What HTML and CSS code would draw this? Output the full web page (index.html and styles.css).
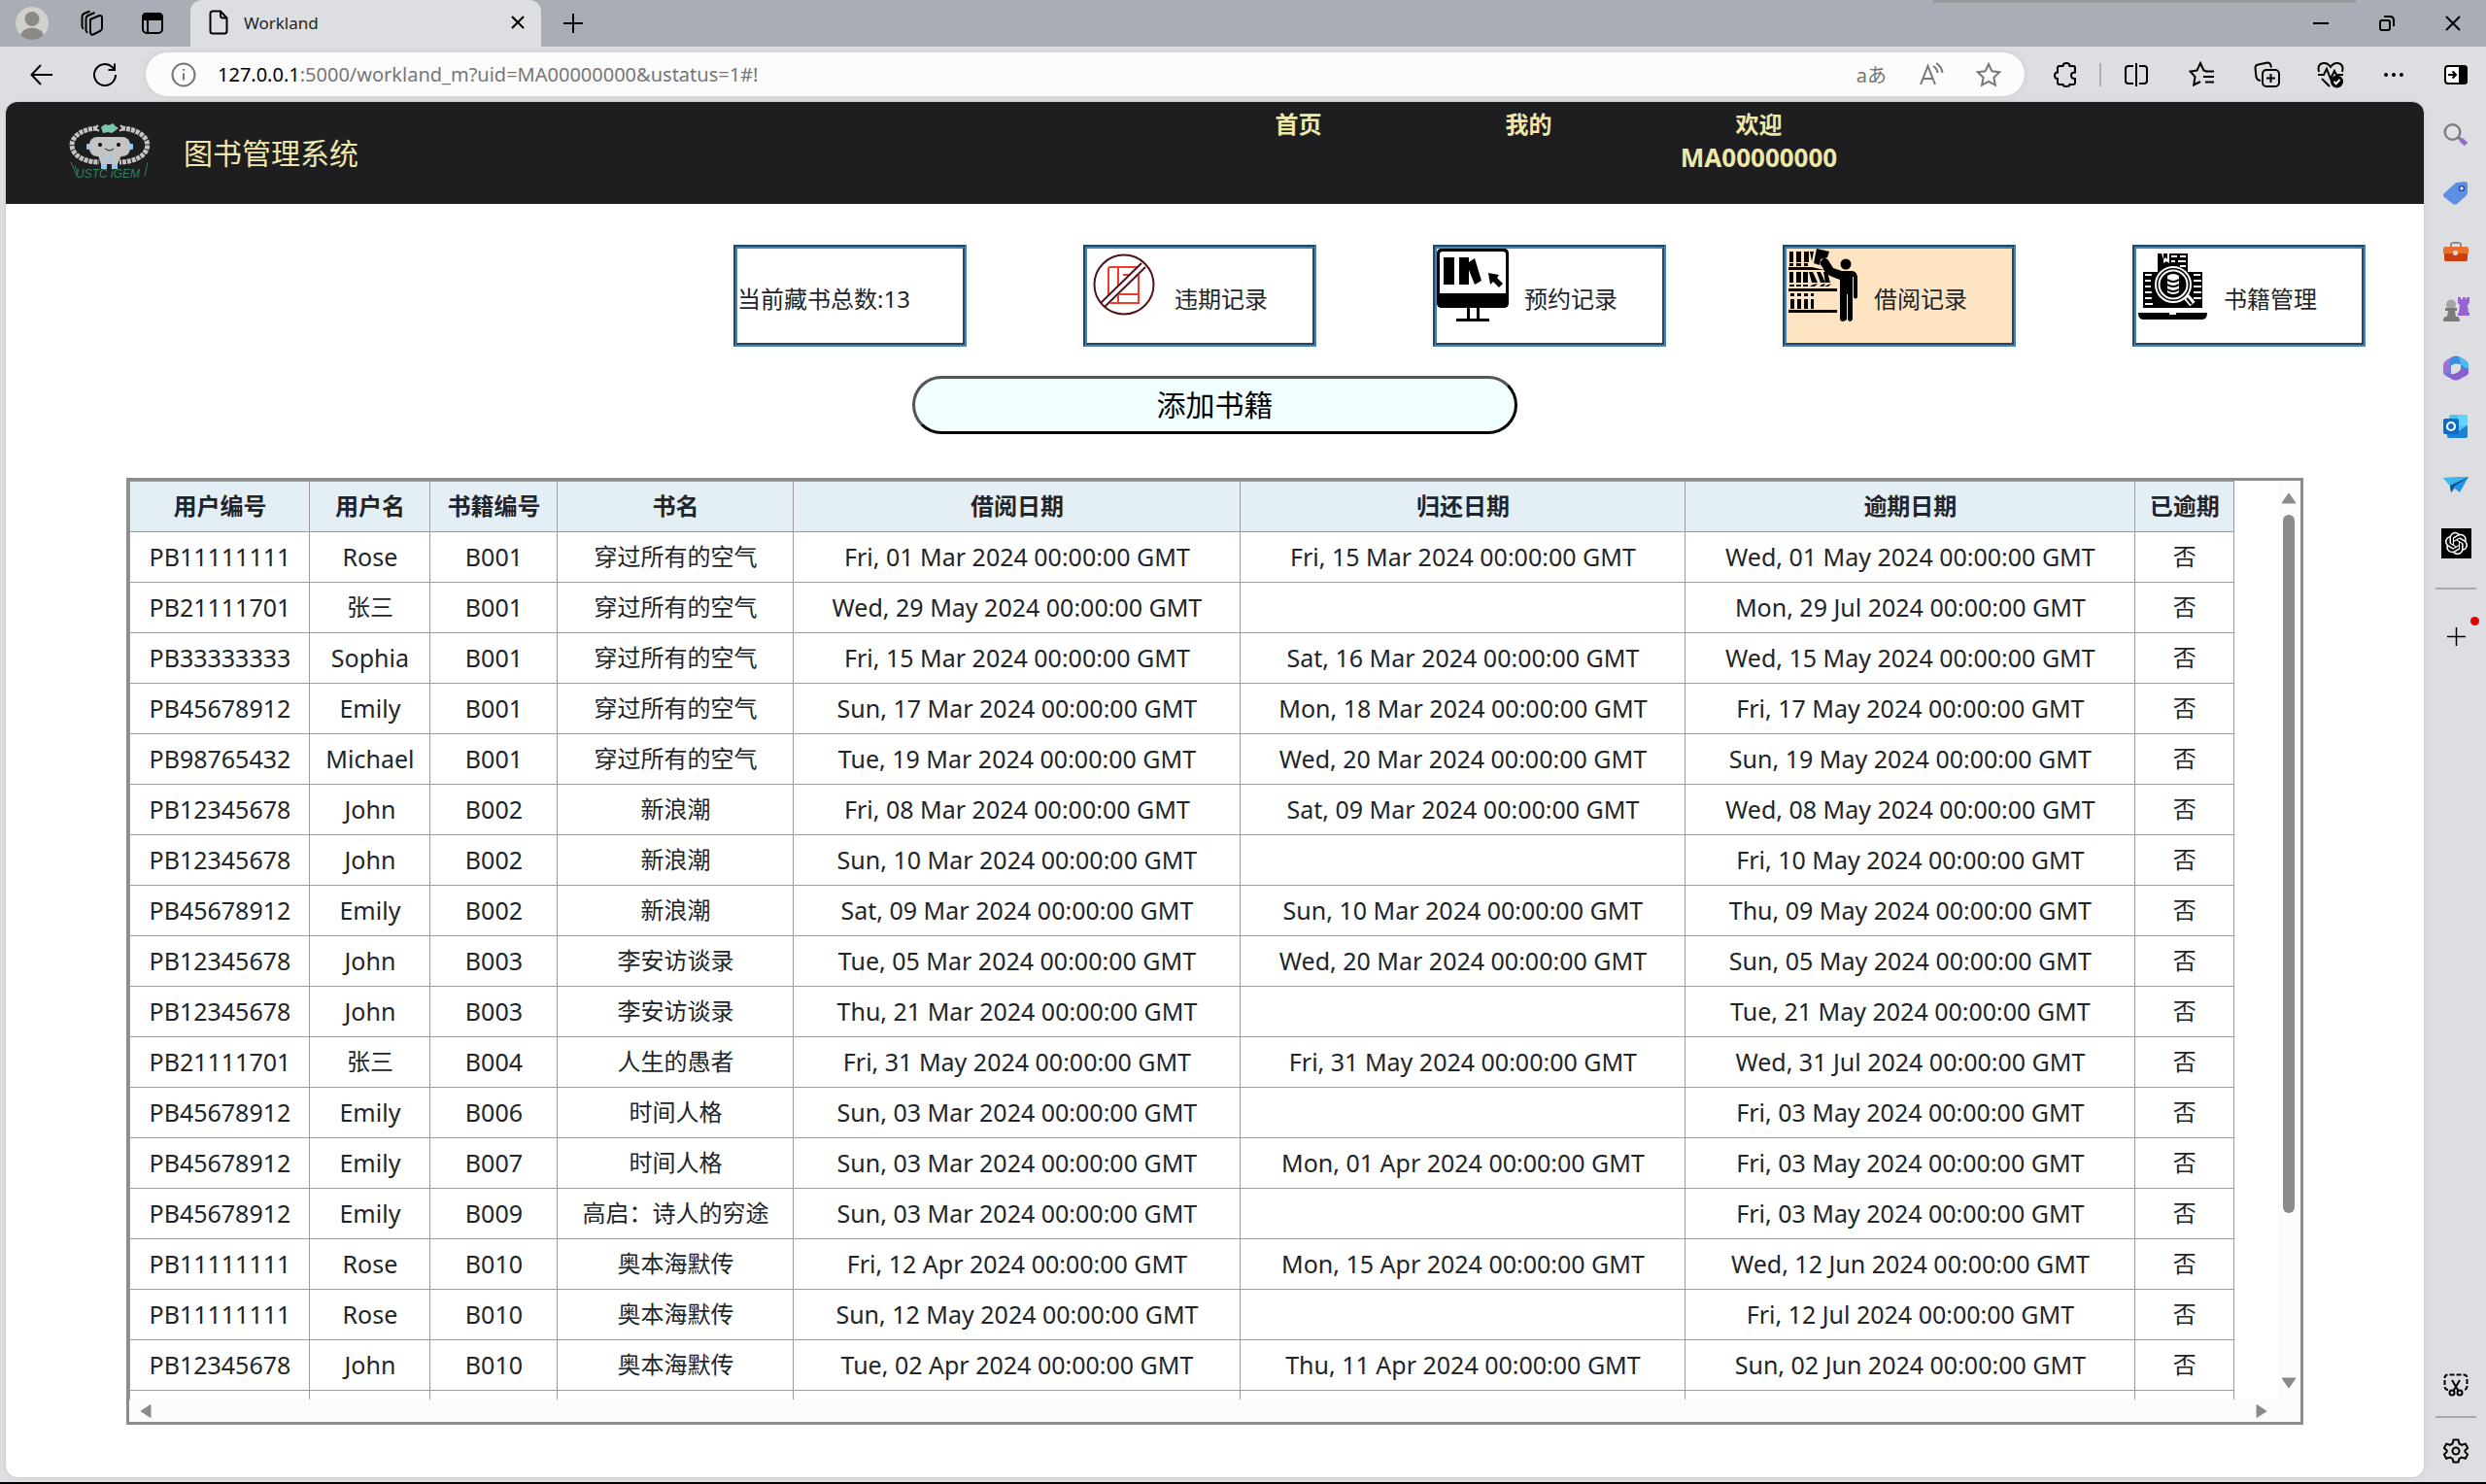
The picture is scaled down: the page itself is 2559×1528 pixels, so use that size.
FILE: index.html
```html
<!DOCTYPE html>
<html lang="zh-CN">
<head>
<meta charset="utf-8">
<title>Workland</title>
<link rel="stylesheet" href="styles.css">
</head>
<body>
<div class="browser">
  <header class="tabstrip">
    <button class="cell cell-tab" aria-label="用户">
      <svg width="34" height="34" viewBox="0 0 34 34"><defs><clipPath id="av"><circle cx="17" cy="17" r="17"/></clipPath></defs><circle cx="17" cy="17" r="17" fill="#d2d0cd"/><g clip-path="url(#av)" fill="#8b8886"><circle cx="17" cy="12.500" r="7.500"/><ellipse cx="17" cy="31" rx="12" ry="9.500"/></g></svg>
    </button>
    <button class="cell cell-tab" aria-label="工作区">
      <svg class="line" width="28" height="28" viewBox="0 0 28 28"><path d="M12 10l8-3.500q4-1.500 4 2v10.500q0 2-2 3l-6 3q-4 2-4-2z"/><path d="M7.500 21V9q0-2 2-3l7-3M3.500 17V7q0-2 2-3l6-2.500M7.500 21q0 2 2 2.500M3.500 17q0 2 1.500 2.500"/></svg>
    </button>
    <button class="cell cell-tab" aria-label="标签">
      <svg class="line" width="24" height="24" viewBox="0 0 24 24"><rect x="2" y="2" width="20" height="20" rx="4"/><path d="M2 8V6q0-4 4-4h12q4 0 4 4v2z" fill="#000"/><path d="M7 8v14"/></svg>
    </button>
    <div class="tab">
      <svg class="line" width="20" height="26" viewBox="0 0 20 26"><path d="M4 1.500h8l6.500 7V22q0 2.500-2.500 2.500H4Q1.500 24.500 1.500 22V4Q1.500 1.500 4 1.500zM12 1.500V6q0 2.500 2.500 2.500h4"/></svg>
      <span class="tab-title">Workland</span>
      <button class="plain" aria-label="关闭标签"><svg class="line" width="14" height="14" viewBox="0 0 14 14"><path d="M1 1l12 12M13 1L1 13"/></svg></button>
    </div>
    <button class="cell" aria-label="新建标签"><svg class="line" width="22" height="22" viewBox="0 0 22 22"><path d="M11 1v20M1 11h20"/></svg></button>
    <div class="spacer"></div>
    <div class="shade"></div>
    <button class="cell cell-win" aria-label="最小化"><svg width="16" height="16" viewBox="0 0 16 16"><path d="M0 7h16v2H0z"/></svg></button>
    <button class="cell cell-win" aria-label="还原"><svg class="line" width="18" height="18" viewBox="0 0 18 18"><rect x="2" y="6" width="10" height="10" rx="2"/><path d="M6 2h6q4 0 4 4v6"/></svg></button>
    <button class="cell cell-win" aria-label="关闭"><svg class="line" width="16" height="16" viewBox="0 0 16 16"><path d="M1 1l14 14M15 1L1 15"/></svg></button>
  </header>

  <div class="toolbar">
    <button class="cell" aria-label="返回"><svg class="line" width="24" height="22" viewBox="0 0 24 22"><path d="M23 11H1.500M11 1L1.500 11 11 21"/></svg></button>
    <button class="cell" aria-label="刷新"><svg class="line" width="26" height="26" viewBox="0 0 26 26"><path d="M24 13A11 11 0 1 1 20.500 5L23 7.500M23 1.500v6.500h-6.500"/></svg></button>
    <label class="address">
      <svg class="line grey" width="26" height="26" viewBox="0 0 26 26"><circle cx="13" cy="13" r="11.500"/><path d="M13 11.500v7M13 7v1.800"/></svg>
      <span class="host">127.0.0.1</span>
      <input class="url" type="text" value=":5000/workland_m?uid=MA00000000&amp;ustatus=1#!">
      <span class="addr-icons">
        <span class="translate">aあ</span>
        <svg class="line grey" width="26" height="26" viewBox="0 0 26 26"><path d="M2 23L9.500 4 17 23M4.500 17h10M15 4q4 2.500 4.500 7M18 1q6 4 6.500 10"/></svg>
        <svg class="line grey" width="26" height="26" viewBox="0 0 26 26"><path d="M13 2l3.400 7.300 7.900 1-5.900 5.500 1.500 7.900L13 19.900l-6.900 3.800 1.500-7.900-5.900-5.500 7.900-1z"/></svg>
      </span>
    </label>
    <button class="cell" aria-label="扩展"><svg class="line" width="26" height="26" viewBox="0 0 26 26"><path d="M6 4h3.500q0-3 3.500-3t3.500 3H20q2 0 2 2v4.500q-4 0-4 3.200t4 3.200V21q0 2-2 2h-3.500q0 2-3.500 2t-3.500-2H6q-2 0-2-2v-4q-3 0-3-3.200T4 10.500V6q0-2 2-2z"/></svg></button>
    <span class="bar"></span>
    <button class="cell cell-wide" aria-label="分屏"><svg class="line" width="26" height="26" viewBox="0 0 26 26"><path d="M10 4H5Q2 4 2 7v12q0 3 3 3h5M16 4h5q3 0 3 3v12q0 3-3 3h-5M13 1v24"/></svg></button>
    <button class="cell cell-wide" aria-label="收藏夹"><svg class="line" width="28" height="28" viewBox="0 0 28 28"><path d="M18 10l-2.500-.5L12 2 8.500 9.500l-7 1 5 5.500-1.300 8.500 6.800-3.500M17 10.500h9M15 16h11M17 21.500h9"/></svg></button>
    <button class="cell" aria-label="集锦"><svg class="line" width="28" height="28" viewBox="0 0 28 28"><path d="M7 20l-2-.5q-2-1-2.500-3L1.500 7q0-3 3-3.500L14 1.500q3 0 3.500 3l.5 2"/><rect x="9" y="9" width="17" height="17" rx="4"/><path d="M17.500 13v9M13 17.500h9"/></svg></button>
    <button class="cell" aria-label="性能"><svg class="line" width="28" height="28" viewBox="0 0 28 28"><path d="M2 11Q0 3 6.500 2 11 1.500 14 6q3-4.500 7.500-4Q28 3 26 11M1 14h6l3-6 4 10 4-8 2 4h7M5 18l8 8"/><circle cx="20.500" cy="21" r="6.500" fill="#000" stroke="none"/><path d="M17.500 21l2.200 2.200 3.800-4.200" stroke="#fff"/></svg></button>
    <button class="cell" aria-label="更多"><svg width="22" height="6" viewBox="0 0 22 6"><circle cx="3" cy="3" r="2"/><circle cx="11" cy="3" r="2"/><circle cx="19" cy="3" r="2"/></svg></button>
    <button class="cell cell-side" aria-label="侧边栏"><svg class="line" width="24" height="20" viewBox="0 0 24 20"><rect x="1" y="1" width="22" height="18" rx="3" fill="#fff"/><path d="M16 1h4q3 0 3 3v12q0 3-3 3h-4z" fill="#000"/><path d="M4 10h8M8.500 6.500L12 10l-3.500 3.500"/></svg></button>
  </div>

  <div class="body">
    <main class="page">
      <div class="masthead">
        <svg class="logo" viewBox="0 0 90 60">
          <path d="M32 6C-3 8-3 40 34 41M57 6C93 8 93 40 55 41" fill="none" stroke="#c4c4c4" stroke-width="5" stroke-dasharray="4 1"/>
          <path d="M33 3l-3 3 4 3M56 3l3 3-4 3" fill="none" stroke="#c4c4c4" stroke-width="2"/>
          <path d="M36 5l4-3 4 1 4-2 3 3 3 2-4 3-3 2-4-1-5 1z" fill="#7cc6ad"/>
          <rect x="21" y="22" width="4" height="6" rx="1" fill="#8fc9f5"/><rect x="65" y="22" width="4" height="6" rx="1" fill="#8fc9f5"/>
          <rect x="24" y="15" width="42" height="20" rx="8" fill="#c4c4c4"/><path d="M33 34h24l-4 9H36z" fill="#c4c4c4"/>
          <circle cx="35" cy="23" r="2"/><circle cx="54" cy="23" r="2"/><path d="M40 27q5 4 9 0" fill="none" stroke="#111"/>
          <circle cx="32" cy="28" r="1.500" fill="#e6b4b4"/><circle cx="58" cy="28" r="1.500" fill="#e6b4b4"/>
          <path d="M42 36q-2 5 2.500 5t2.500-5M44.500 34v4" fill="none" stroke="#8fc9f5"/>
          <path d="M36 43h6v5h-6zM47 43h6v5h-6z" fill="#8fc9f5"/>
          <text x="10" y="57" class="logo-text">USTC iGEM</text>
          <path d="M5 41l6 14M84 41l-3 14M9 44l3 9" stroke="#2f8160"/>
        </svg>
        <h1 class="brand">图书管理系统</h1>
        <nav class="nav">
          <a href="#home">首页</a>
          <a href="#mine">我的</a>
          <a href="#user">欢迎<br><span class="uid">MA00000000</span></a>
        </nav>
      </div>

      <div class="cards">
        <div class="card">当前藏书总数:13</div>
        <button class="card">
          <svg width="75" height="75" viewBox="0 0 75 75" fill="none" stroke-width="2"><path d="M24 19h29v37H24q-2 0-2-2V21q0-2 2-2zM32 19v37M22 47h31M37 27h8" stroke="#ef3a2d"/><path d="M15 56L57 15l4 4-42 42z" fill="#fff" stroke="none"/><circle cx="38" cy="37" r="30.500" stroke="#50151a"/><path d="M14 56L56 15M18 60L60 19" stroke="#50151a"/></svg>
          违期记录
        </button>
        <button class="card">
          <svg width="75" height="75" viewBox="0 0 75 75"><path d="M5 0h64q5 0 5 5v51q0 5-5 5H44v11h10v3H20v-3h11V61H5q-5 0-5-5V5q0-5 5-5zM6 3Q3 3 3 6v40h68V6q0-3-3-3zM34 61v11h7V61z" fill-rule="evenodd"/><path d="M7 9h11v28H7zM23 9h10v5l6-4 7 23-7 4-6-15v15H23zM53 25l11 2-2 3 6 6-4 4-6-6-3 3z"/></svg>
          预约记录
        </button>
        <button class="card active">
          <svg width="75" height="75" viewBox="0 0 75 75"><path d="M3 3h4v11H3zM10 3h5v11h-5zM18 3h5v11h-5zM24 3h4l-2 10zM3 15h4v3H3zM10 15h5v3h-5zM18 15h4v3h-4zM2 19h24l13 3H2zM3 24h4v11H3zM10 24h5v11h-5zM17 24h5v11h-5zM23 24h4l5 11h-6zM31 24h4l5 11h-5zM38 24h4l3 11h-5zM3 37h5v2H3zM10 37h5v2h-5zM17 37h5v2h-5zM27 37l5-1-3 3h-5zM36 37l4-1-2 3h-4zM43 37l3-1-3 3h-4zM2 41h50v3H2zM4 46h4v3H4zM11 46h4v3h-4zM18 46h4v3h-4zM25 46h3v3h-3zM4 52h4v10H4zM11 52h4v10h-4zM18 52h4v10h-4zM25 52h3v10h-3zM2 63h50v3H2zM31 0l13 3-2 6-7 2-1 6-6-2z"/><circle cx="61" cy="16" r="5.500"/><path d="M37 11q3-3 6 1l5 8 9 3h10q6 0 6 8v19q-2 3-4 0V29h-1v44q-3 4-5 0V47h-1v26q-5 4-7 0V32l-8-3q-8-3-10-10-5-4 0-8z"/></svg>
          借阅记录
        </button>
        <button class="card">
          <svg width="75" height="75" viewBox="0 0 75 75"><path d="M22 5h31v19h15v37H7V24h15zM2 66h32v2h7v-2h32q0 7-5 7H7q-5 0-5-7z"/><path d="M26 5h2v10l3-2 3 2V5h-2v6l-2-2-2 2M36 7h6v2h-6zM45 7h6v2h-6zM36 12h4v2h-4zM43 12h8v2h-8zM45 17h6v2h-6zM9 26h7v2H9zM9 32h6v2H9zM9 38h6v2H9zM9 44h7v2H9zM9 50h7v2H9zM9 56h8v2H9zM59 26h7v2h-7zM59 32h8v2h-8zM59 38h8v2h-8zM59 44h8v2h-8zM59 50h8v2h-8z" fill="#fff"/><circle cx="38" cy="37" r="18" stroke="#fff" stroke-width="2"/><circle cx="38" cy="37" r="14.500" fill="none" stroke="#fff" stroke-width="2"/><path d="M32 28q6-4 12 0v17q-6 4-12 0z" fill="#fff"/><path d="M32 32q6 4 12 0M32 37q6 4 12 0M32 42q6 4 12 0" fill="none" stroke="#000" stroke-width="2"/><path d="M51 49l7 8" stroke="#fff" stroke-width="7"/><path d="M52 51l5 6" stroke="#000" stroke-width="2"/></svg>
          书籍管理
        </button>
      </div>

      <button class="add">添加书籍</button>

      <section class="panel">
        <div class="scroll">
          <table>
            <colgroup><col class="c-id"><col class="c-name"><col class="c-book"><col class="c-title"><col class="c-loan"><col class="c-return"><col><col class="c-over"></colgroup>
            <thead><tr><th>用户编号</th><th>用户名</th><th>书籍编号</th><th>书名</th><th>借阅日期</th><th>归还日期</th><th>逾期日期</th><th>已逾期</th></tr></thead>
            <tbody>
              <tr><td>PB11111111</td><td>Rose</td><td>B001</td><td class="zh">穿过所有的空气</td><td>Fri, 01 Mar 2024 00:00:00 GMT</td><td>Fri, 15 Mar 2024 00:00:00 GMT</td><td>Wed, 01 May 2024 00:00:00 GMT</td><td class="zh">否</td></tr>
              <tr><td>PB21111701</td><td class="zh">张三</td><td>B001</td><td class="zh">穿过所有的空气</td><td>Wed, 29 May 2024 00:00:00 GMT</td><td></td><td>Mon, 29 Jul 2024 00:00:00 GMT</td><td class="zh">否</td></tr>
              <tr><td>PB33333333</td><td>Sophia</td><td>B001</td><td class="zh">穿过所有的空气</td><td>Fri, 15 Mar 2024 00:00:00 GMT</td><td>Sat, 16 Mar 2024 00:00:00 GMT</td><td>Wed, 15 May 2024 00:00:00 GMT</td><td class="zh">否</td></tr>
              <tr><td>PB45678912</td><td>Emily</td><td>B001</td><td class="zh">穿过所有的空气</td><td>Sun, 17 Mar 2024 00:00:00 GMT</td><td>Mon, 18 Mar 2024 00:00:00 GMT</td><td>Fri, 17 May 2024 00:00:00 GMT</td><td class="zh">否</td></tr>
              <tr><td>PB98765432</td><td>Michael</td><td>B001</td><td class="zh">穿过所有的空气</td><td>Tue, 19 Mar 2024 00:00:00 GMT</td><td>Wed, 20 Mar 2024 00:00:00 GMT</td><td>Sun, 19 May 2024 00:00:00 GMT</td><td class="zh">否</td></tr>
              <tr><td>PB12345678</td><td>John</td><td>B002</td><td class="zh">新浪潮</td><td>Fri, 08 Mar 2024 00:00:00 GMT</td><td>Sat, 09 Mar 2024 00:00:00 GMT</td><td>Wed, 08 May 2024 00:00:00 GMT</td><td class="zh">否</td></tr>
              <tr><td>PB12345678</td><td>John</td><td>B002</td><td class="zh">新浪潮</td><td>Sun, 10 Mar 2024 00:00:00 GMT</td><td></td><td>Fri, 10 May 2024 00:00:00 GMT</td><td class="zh">否</td></tr>
              <tr><td>PB45678912</td><td>Emily</td><td>B002</td><td class="zh">新浪潮</td><td>Sat, 09 Mar 2024 00:00:00 GMT</td><td>Sun, 10 Mar 2024 00:00:00 GMT</td><td>Thu, 09 May 2024 00:00:00 GMT</td><td class="zh">否</td></tr>
              <tr><td>PB12345678</td><td>John</td><td>B003</td><td class="zh">李安访谈录</td><td>Tue, 05 Mar 2024 00:00:00 GMT</td><td>Wed, 20 Mar 2024 00:00:00 GMT</td><td>Sun, 05 May 2024 00:00:00 GMT</td><td class="zh">否</td></tr>
              <tr><td>PB12345678</td><td>John</td><td>B003</td><td class="zh">李安访谈录</td><td>Thu, 21 Mar 2024 00:00:00 GMT</td><td></td><td>Tue, 21 May 2024 00:00:00 GMT</td><td class="zh">否</td></tr>
              <tr><td>PB21111701</td><td class="zh">张三</td><td>B004</td><td class="zh">人生的愚者</td><td>Fri, 31 May 2024 00:00:00 GMT</td><td>Fri, 31 May 2024 00:00:00 GMT</td><td>Wed, 31 Jul 2024 00:00:00 GMT</td><td class="zh">否</td></tr>
              <tr><td>PB45678912</td><td>Emily</td><td>B006</td><td class="zh">时间人格</td><td>Sun, 03 Mar 2024 00:00:00 GMT</td><td></td><td>Fri, 03 May 2024 00:00:00 GMT</td><td class="zh">否</td></tr>
              <tr><td>PB45678912</td><td>Emily</td><td>B007</td><td class="zh">时间人格</td><td>Sun, 03 Mar 2024 00:00:00 GMT</td><td>Mon, 01 Apr 2024 00:00:00 GMT</td><td>Fri, 03 May 2024 00:00:00 GMT</td><td class="zh">否</td></tr>
              <tr><td>PB45678912</td><td>Emily</td><td>B009</td><td class="zh">高启：诗人的穷途</td><td>Sun, 03 Mar 2024 00:00:00 GMT</td><td></td><td>Fri, 03 May 2024 00:00:00 GMT</td><td class="zh">否</td></tr>
              <tr><td>PB11111111</td><td>Rose</td><td>B010</td><td class="zh">奥本海默传</td><td>Fri, 12 Apr 2024 00:00:00 GMT</td><td>Mon, 15 Apr 2024 00:00:00 GMT</td><td>Wed, 12 Jun 2024 00:00:00 GMT</td><td class="zh">否</td></tr>
              <tr><td>PB11111111</td><td>Rose</td><td>B010</td><td class="zh">奥本海默传</td><td>Sun, 12 May 2024 00:00:00 GMT</td><td></td><td>Fri, 12 Jul 2024 00:00:00 GMT</td><td class="zh">否</td></tr>
              <tr><td>PB12345678</td><td>John</td><td>B010</td><td class="zh">奥本海默传</td><td>Tue, 02 Apr 2024 00:00:00 GMT</td><td>Thu, 11 Apr 2024 00:00:00 GMT</td><td>Sun, 02 Jun 2024 00:00:00 GMT</td><td class="zh">否</td></tr>
              <tr><td></td><td></td><td></td><td></td><td></td><td></td><td></td><td></td></tr>
            </tbody>
          </table>
        </div>
        <div class="vbar">
          <svg width="16" height="12" viewBox="0 0 16 12"><path d="M8 1l7 10H1z" stroke="#8b8b8b" stroke-linejoin="round"/></svg>
          <div class="track"><div class="thumb"></div></div>
          <svg width="16" height="12" viewBox="0 0 16 12"><path d="M1 1h14L8 11z" stroke="#8b8b8b" stroke-linejoin="round"/></svg>
        </div>
        <div class="hbar">
          <svg width="12" height="16" viewBox="0 0 12 16"><path d="M11 1.500v13L1 8z" stroke="#8b8b8b" stroke-linejoin="round"/></svg>
          <svg width="12" height="16" viewBox="0 0 12 16"><path d="M1 1.500L11 8 1 14.500z" stroke="#8b8b8b" stroke-linejoin="round"/></svg>
        </div>
        <div class="corner"></div>
      </section>
    </main>

    <aside class="sidebar">
      <button class="side" aria-label="搜索"><svg width="26" height="24" viewBox="0 0 26 24"><circle cx="9.500" cy="9" r="7.800" fill="#dfe3e8" stroke="#7d7d7d" stroke-width="2.400"/><path d="M15 14l3 2.500" stroke="#7d7d7d" stroke-width="3"/><path d="M18 16.500l5.500 5" stroke="#9a67cf" stroke-width="5"/></svg></button>
      <button class="side" aria-label="购物"><svg width="26" height="26" viewBox="0 0 26 26"><path d="M13 2l9-1q3 0 3 3v8q0 2-2 4l-9 8q-2 1-4 0l-9-7q-2-2 0-4z" fill="#5d8fe3"/><circle cx="19" cy="8" r="2.500" fill="#dce8fa" stroke="#2b51a0" stroke-width="1.500"/></svg></button>
      <button class="side" aria-label="工具"><svg width="28" height="22" viewBox="0 0 28 22"><path d="M9 7V4q0-2 2-2h6q2 0 2 2v3" fill="none" stroke="#8f8f8f" stroke-width="2"/><rect x="1" y="6" width="26" height="8" rx="2" fill="#e9702e"/><path d="M2 13h24v6q0 2-2 2H4q-2 0-2-2z" fill="#ca3f12"/><rect x="11" y="10" width="5" height="5" rx="2" fill="#d9d9d9"/></svg></button>
      <button class="side" aria-label="游戏"><svg width="28" height="28" viewBox="0 0 28 28"><path d="M16 1h3v2h2V1h3v2h1V1h3v6l-2 2 1 8h1v3H16v-3h1l1-8-2-2z" fill="#9b63d2"/><circle cx="9" cy="8.500" r="5" fill="#a5a5a5"/><path d="M3 12h12v3h-2l1 6h2q2 1 2 5H1q0-4 2-5h2l1-6H3z" fill="#7a7a7a"/></svg></button>
      <button class="side" aria-label="Microsoft 365"><svg width="26" height="26" viewBox="0 0 26 26"><path d="M10 1L3 5Q0 7 0 10v7q0 3 3 4l5 2V9z" fill="#a070d8"/><path d="M10 1q3-1 6 0l7 4q3 2 3 5v7l-8-2V9L8 10l-1 9-5 1 5-5V4z" fill="#3a8ee0"/><path d="M16 1l7 4q3 2 3 5v5l-8-6z" fill="#4cbcf0"/><path d="M26 13v4q0 3-3 4l-7 4q-3 1-6 0l-7-4 5-2q6 1 10-5z" fill="#8a5fce"/><circle cx="13" cy="13" r="4.500" fill="#dddee2"/></svg></button>
      <button class="side" aria-label="Outlook"><svg width="26" height="26" viewBox="0 0 26 26"><rect x="6" y="1" width="19" height="15" rx="2" fill="#4cc3f5"/><path d="M15 1h8q2 0 2 2v9H15z" fill="#61d5fb"/><path d="M4 12l11 6 10-6v11q0 2-2 2H6q-2 0-2-2z" fill="#1a83d4"/><rect x="0" y="5" width="16" height="16" rx="2" fill="#0f6cc4"/><circle cx="8" cy="13" r="4" fill="none" stroke="#fff" stroke-width="2.200"/></svg></button>
      <button class="side" aria-label="Drop"><svg width="26" height="18" viewBox="0 0 26 18"><path d="M0 2L26 1 17 17l-5-4-4 4-1-7z" fill="#2594dc"/><path d="M0 2L26 1 7 10z" fill="#3db6ee"/><path d="M26 1L7 10l1 7 3-6z" fill="#0b4f96"/></svg></button>
      <button class="side" aria-label="ChatGPT"><svg width="31" height="31" viewBox="-4 -4 32 32"><path d="M-4-4h32v32H-4z"/><path fill="#fff" d="M22.282 9.821a5.985 5.985 0 0 0-.516-4.910 6.046 6.046 0 0 0-6.510-2.900A6.065 6.065 0 0 0 4.981 4.182a5.985 5.985 0 0 0-3.998 2.900 6.046 6.046 0 0 0 .743 7.097 5.980 5.980 0 0 0 .511 4.911 6.051 6.051 0 0 0 6.515 2.900A5.985 5.985 0 0 0 13.260 24a6.056 6.056 0 0 0 5.772-4.206 5.989 5.989 0 0 0 3.998-2.900 6.056 6.056 0 0 0-.748-7.073zm-9.022 12.608a4.476 4.476 0 0 1-2.876-1.041l.142-.080 4.778-2.758a.795.795 0 0 0 .393-.681v-6.737l2.020 1.169a.071.071 0 0 1 .038.052v5.583a4.504 4.504 0 0 1-4.495 4.494zm-9.661-4.125a4.471 4.471 0 0 1-.535-3.014l.142.085 4.783 2.758a.771.771 0 0 0 .781 0l5.843-3.369v2.332a.080.080 0 0 1-.033.062L9.740 19.950a4.499 4.499 0 0 1-6.141-1.646zM2.341 7.896a4.485 4.485 0 0 1 2.366-1.973V11.600a.766.766 0 0 0 .388.677l5.814 3.354-2.020 1.169a.076.076 0 0 1-.071 0l-4.830-2.787A4.504 4.504 0 0 1 2.341 7.872zm16.596 3.856L13.104 8.364 15.119 7.200a.076.076 0 0 1 .071 0l4.830 2.791a4.494 4.494 0 0 1-.677 8.104v-5.677a.790.790 0 0 0-.407-.667zm2.011-3.023l-.142-.085-4.774-2.782a.776.776 0 0 0-.785 0L9.409 9.230V6.897a.066.066 0 0 1 .028-.062l4.830-2.787a4.499 4.499 0 0 1 6.680 4.660zM8.307 12.863l-2.020-1.164a.080.080 0 0 1-.038-.057V6.074a4.499 4.499 0 0 1 7.376-3.454l-.142.081L8.704 5.459a.795.795 0 0 0-.393.681zm1.098-2.365l2.602-1.500 2.607 1.500v2.999l-2.597 1.500-2.607-1.500Z"/></svg></button>
      <hr>
      <button class="side add-app" aria-label="添加"><svg class="line" width="19" height="19" viewBox="0 0 19 19"><path d="M9.500 0v19M0 9.500h19" stroke-width="1.500"/></svg><span class="dot"></span></button>
      <div class="spacer"></div>
      <button class="side" aria-label="截图"><svg class="line" width="26" height="24" viewBox="0 0 26 24"><path d="M5 17q-3.500 0-3.500-4V5q0-3.500 3.500-3.500h16q3.500 0 3.500 3.500v8q0 4-3.500 4" stroke-dasharray="5 2"/><path d="M9 7l6.500 11M17 7l-6.500 11"/><circle cx="9" cy="20" r="2.500"/><circle cx="17" cy="20" r="2.500"/></svg></button>
      <hr class="low">
      <button class="side" aria-label="设置"><svg class="line" width="26" height="26" viewBox="0 0 26 26"><path d="M10.500 1.500h5l1 4 2.500 1.300 3.800-1.200 2.400 4.300-2.800 2.600v1.400l2.800 2.600-2.400 4.300-3.800-1.200-2.500 1.300-1 3.600h-5l-1-3.600L7 19.600l-3.800 1.200L.9 16.500l2.800-2.600v-1.400L.9 9.900l2.400-4.300L7 6.800l2.500-1.300z"/><circle cx="13" cy="13" r="3.500"/></svg></button>
    </aside>
  </div>
</div>
</body>
</html>
```
FILE: styles.css
```css
* { box-sizing: border-box; }

body {
  margin: 0;
  font-family: "Noto Sans", "Noto Sans CJK SC", sans-serif;
  color: #212529;
}

button {
  padding: 0;
  border: 0;
  background: none;
  font: inherit;
  color: inherit;
}

svg { display: block; flex: none; }
.line { fill: none; stroke: #000; stroke-width: 2; }
.grey { stroke: #767676; }
.spacer { flex: 1; }

.browser {
  display: flex;
  flex-direction: column;
  height: 100vh;
  background: #dddee2;
  border-bottom: 2px solid #000;
}

.cell {
  display: flex;
  flex: none;
  align-items: center;
  justify-content: center;
  width: 65px;
}

/* tab strip */
.tabstrip {
  position: relative;
  display: flex;
  flex: none;
  height: 48px;
  padding-left: 2px;
  background: #a9aeb6;
}
.cell-tab { width: 62px; }
.cell-win { width: 68px; }
.tab {
  display: flex;
  align-items: center;
  gap: 16px;
  width: 361px;
  margin-left: 8px;
  padding: 0 17px 2px 19px;
  border-radius: 12px 12px 0 0;
  background: #dddee2;
  font-size: 17px;
}
.tab-title { flex: 1; }
.shade {
  position: absolute;
  top: 0;
  right: 134px;
  width: 435px;
  height: 3px;
  background: #959a9c;
}

/* toolbar */
.toolbar {
  display: flex;
  flex: none;
  align-items: center;
  height: 57px;
  padding-left: 10px;
}
.address {
  display: flex;
  flex: 1;
  align-items: center;
  height: 45px;
  margin: 0 10px;
  padding: 0 24px 0 26px;
  border-radius: 23px;
  background: #fcfcfc;
  box-shadow: 0 0 6px #c8c9cd;
  font-size: 20px;
}
.host { margin-left: 22px; color: #000; }
.url {
  flex: 1;
  padding: 0;
  border: 0;
  background: none;
  font: inherit;
  color: #767676;
}
.addr-icons { display: flex; align-items: center; gap: 33px; color: #767676; }
.translate { font-size: 20px; }
.bar { width: 2px; height: 24px; margin: 0 2px; background: #a9aeb6; }
.cell-side { width: 63px; }
.cell-wide { width: 68px; }

.body { display: flex; flex: 1; min-height: 0; padding-left: 6px; }

/* page */
.page {
  display: flex;
  flex: 1;
  flex-direction: column;
  min-width: 0;
  margin-bottom: 5px;
  padding-bottom: 54px;
  border-radius: 12px;
  background: #fff;
  box-shadow: 0 0 3px #b8babd;
  overflow: hidden;
}
.masthead {
  display: flex;
  flex: none;
  align-items: center;
  height: 105px;
  padding: 0 0 4px 62px;
  background: #1e1e20;
  color: #eee8aa;
}
.logo { width: 90px; height: 60px; }
.logo-text { font: italic 400 12px "Liberation Sans", sans-serif; fill: #2f8160; }
.brand { margin: 0 0 0 31px; font-size: 30px; font-weight: 400; }
.nav { display: flex; align-self: flex-start; margin-left: auto; margin-right: 566px; padding-top: 5px; }
.nav a {
  width: 237px;
  font-size: 24px;
  font-weight: 700;
  line-height: 35px;
  text-align: center;
  text-decoration: none;
  color: inherit;
}
.uid { font-size: 26px; }

.cards { display: flex; flex: none; justify-content: flex-end; gap: 120px; padding: 42px 60px 30px; }
.card {
  display: flex;
  align-items: flex-start;
  gap: 15px;
  width: 240px;
  height: 105px;
  border: 4px groove steelblue;
  font-size: 24px;
  line-height: 104px;
  white-space: nowrap;
}
.active { background: #ffe4c4; }

.add {
  flex: none;
  align-self: center;
  width: 25%;
  height: 60px;
  border: 3px outset #000;
  border-radius: 30px;
  background: #f0ffff;
  font-size: 30px;
  line-height: 52px;
  color: #000;
}

/* loan records */
.panel {
  display: grid;
  flex: 1;
  grid-template: minmax(0, 1fr) 23px / minmax(0, 1fr) 23px;
  min-height: 0;
  margin: 45px 5% 0;
  border: 3px solid #8c8c8c;
}
.scroll { overflow: hidden; }
table { width: 98%; border-collapse: collapse; table-layout: fixed; }
th, td {
  height: 52px;
  padding: 0 0 2px;
  border: 1px solid #9b9b9b;
  font-size: 25px;
  line-height: 36px;
  text-align: center;
  white-space: nowrap;
}
th { background: #e4eff5; }
th, .zh { font-size: 24px; }
.c-id { width: 185px; }
.c-name { width: 124px; }
.c-book { width: 131px; }
.c-title { width: 243px; }
.c-loan { width: 460px; }
.c-return { width: 458px; }
.c-over { width: 102px; }

.vbar, .hbar { display: flex; align-items: center; background: #fcfcfc; fill: #8b8b8b; }
.vbar { flex-direction: column; gap: 11px; padding: 12px 0 11px; }
.hbar { justify-content: space-between; padding: 0 11px; }
.track { flex: 1; }
.thumb { width: 12px; height: 82%; border-radius: 6px; background: #8b8b8b; }
.corner { background: #fcfcfc; }

/* browser sidebar */
.sidebar { display: flex; flex: none; flex-direction: column; align-items: center; width: 64px; padding: 4px 0 2px 2px; }
.side { display: flex; flex: none; align-items: center; justify-content: center; width: 60px; height: 60px; }
.sidebar hr { width: 42px; height: 2px; margin: 16px 0 18px; border: 0; background: #a9aaae; }
.sidebar .low { margin: 2px 0 4px; }
.add-app { position: relative; }
.dot { position: absolute; top: 10px; right: 6px; width: 9px; height: 9px; border-radius: 50%; background: #e00000; }
```
